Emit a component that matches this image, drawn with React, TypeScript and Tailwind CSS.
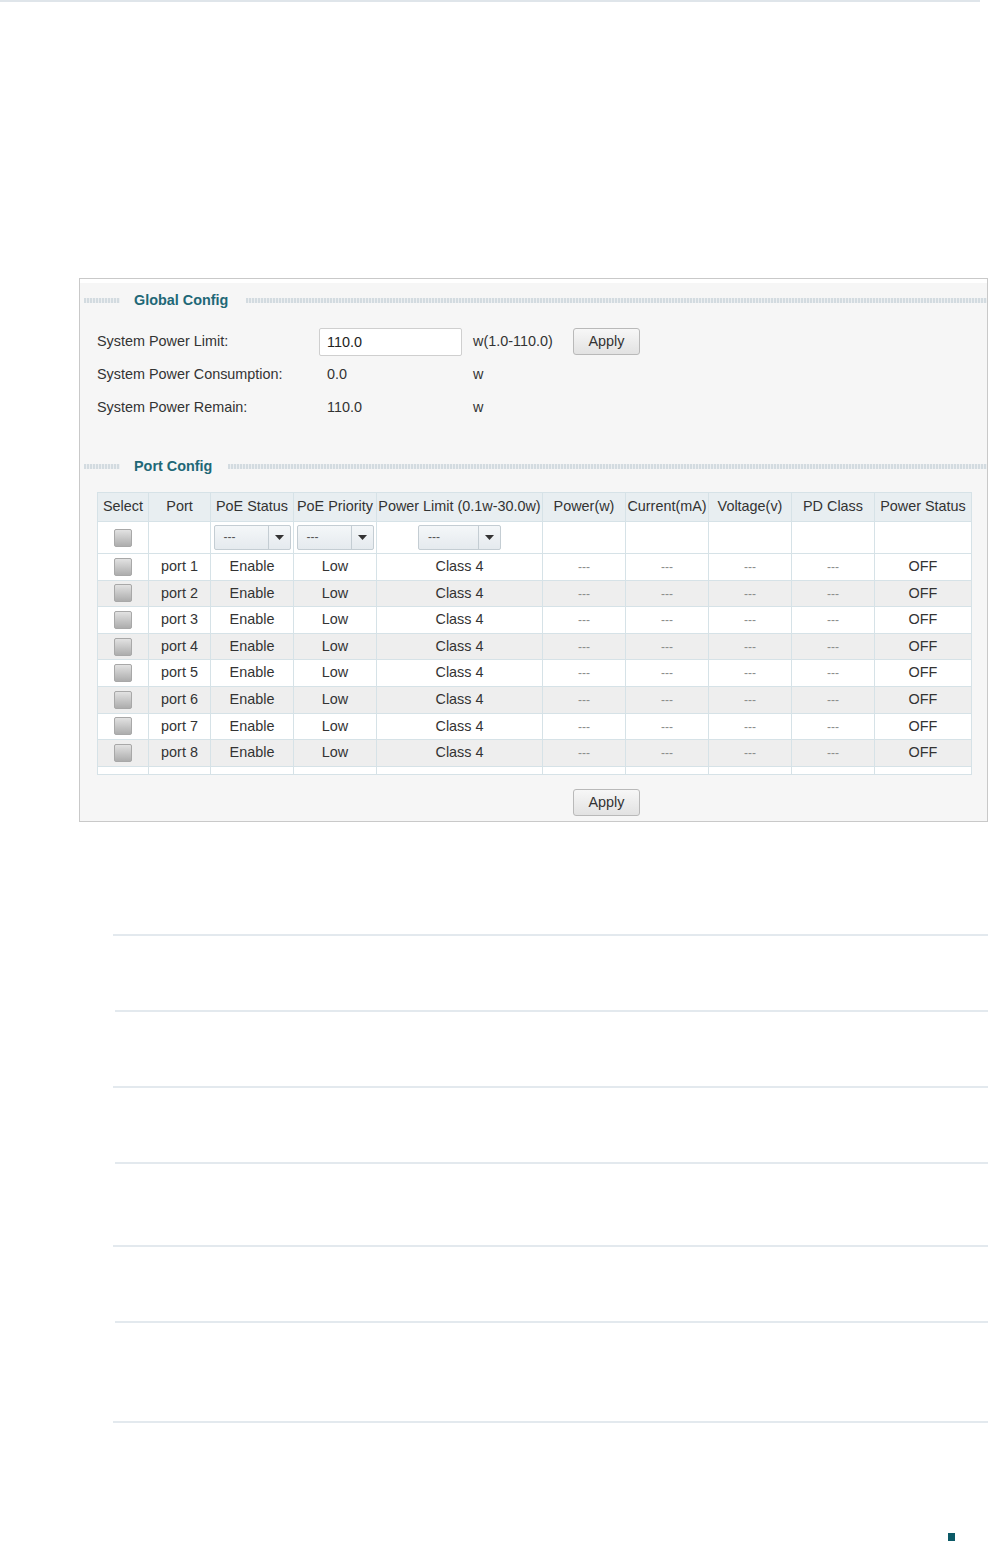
import React from "react";

const headers = [
  "Select",
  "Port",
  "PoE Status",
  "PoE Priority",
  "Power Limit (0.1w-30.0w)",
  "Power(w)",
  "Current(mA)",
  "Voltage(v)",
  "PD Class",
  "Power Status",
];

const colWidths = [51, 62, 83, 83, 166, 83, 83, 83, 83, 97];

const ports = [1, 2, 3, 4, 5, 6, 7, 8];

// lines below the panel: top offset from previous line, and left start
const docLines = [
  { mt: "mt-[112px]", ml: "ml-[113px]" },
  { mt: "mt-[74px]", ml: "ml-[115px]" },
  { mt: "mt-[74px]", ml: "ml-[113px]" },
  { mt: "mt-[74px]", ml: "ml-[115px]" },
  { mt: "mt-[81px]", ml: "ml-[113px]" },
  { mt: "mt-[74px]", ml: "ml-[115px]" },
  { mt: "mt-[98px]", ml: "ml-[113px]" },
];

const SectionTitle = ({ title, gap }: { title: string; gap: string }) => (
  <div className="flex h-[20px] items-center">
    <div className="ml-[4px] h-[5px] w-[36px] bg-[repeating-linear-gradient(90deg,#d3dbe0_0px,#d3dbe0_2px,#eceff1_2px,#eceff1_3px)]" />
    <span className="ml-[14px] text-[14.4px] font-bold leading-[20px] text-[#1f6877]">
      {title}
    </span>
    <div
      className={`${gap} h-[5px] flex-1 bg-[repeating-linear-gradient(90deg,#d3dbe0_0px,#d3dbe0_2px,#eceff1_2px,#eceff1_3px)]`}
    />
  </div>
);

const ApplyButton = () => (
  <button className="h-[27px] w-[67px] rounded-[3px] border border-[#b9b9b9] bg-gradient-to-b from-[#f7f7f7] to-[#e2e2e2] text-[14.4px] leading-[25px] text-[#333]">
    Apply
  </button>
);

const Checkbox = () => (
  <span className="mx-auto block h-[18px] w-[18px] rounded-[2px] border border-[#a8a8a8] bg-gradient-to-b from-[#e2e2e2] to-[#adadad]" />
);

const Dropdown = ({ width }: { width: string }) => (
  <div
    className={`mx-auto flex h-[25px] ${width} items-stretch rounded-[2px] border border-[#c4cdd3] bg-gradient-to-b from-[#f4f7f9] to-[#e5eaee]`}
  >
    <span className="flex-1 pl-[9px] text-left text-[12px] leading-[23px] text-[#555]">
      ---
    </span>
    <span className="flex w-[22px] items-center justify-center border-l border-[#c4cdd3]">
      <svg width="9" height="5" viewBox="0 0 9 5">
        <path d="M0 0h9L4.5 5z" fill="#333" />
      </svg>
    </span>
  </div>
);

const Dash = () => <span className="text-[12px] text-[#8c8c8c]">---</span>;

const cell = "border border-[#d6e2e7] p-0 text-center";

const App = () => {
  return (
    <div className="relative h-[1542px] w-[988px] overflow-hidden bg-white font-['Liberation_Sans',Arial,sans-serif] text-[14.4px] text-[#333]">
      <div className="h-[2px] w-[980px] bg-[#dfe5ea]" />

      {/* PoE config panel */}
      <div className="ml-[79px] mt-[276px] h-[544px] w-[909px] border border-[#c9c9c9] bg-[#f6f6f6]">
        <div className="h-[4px] bg-white" />
        <div className="mt-[7px]">
          <SectionTitle title="Global Config" gap="ml-[18px]" />
        </div>

        <div className="ml-[17px] mt-[15px] grid grid-cols-[222px_154px_auto] items-center">
          <div className="flex h-[33px] items-center">System Power Limit:</div>
          <div className="flex h-[33px] items-center">
            <div className="h-[28px] w-[143px] rounded-[2px] border border-[#cfcfcf] bg-white pl-[7px] leading-[26px] text-[#222]">
              110.0
            </div>
          </div>
          <div className="flex h-[33px] items-center">
            <span className="w-[100px]">w(1.0-110.0)</span>
            <ApplyButton />
          </div>

          <div className="flex h-[33px] items-center">System Power Consumption:</div>
          <div className="flex h-[33px] items-center pl-[8px]">0.0</div>
          <div className="flex h-[33px] items-center">w</div>

          <div className="flex h-[33px] items-center">System Power Remain:</div>
          <div className="flex h-[33px] items-center pl-[8px]">110.0</div>
          <div className="flex h-[33px] items-center">w</div>
        </div>

        <div className="mt-[32px]">
          <SectionTitle title="Port Config" gap="ml-[16px]" />
        </div>

        <table className="ml-[17px] mt-[16px] w-[875px] table-fixed border-collapse">
          <colgroup>
            {colWidths.map((w, i) => (
              <col key={i} style={{ width: w }} />
            ))}
          </colgroup>
          <thead>
            <tr className="h-[29px] bg-[#e8eef1]">
              {headers.map((h) => (
                <th key={h} className={`${cell} whitespace-nowrap font-normal text-[#333]`}>
                  {h}
                </th>
              ))}
            </tr>
          </thead>
          <tbody>
            <tr className="h-[32px] bg-white">
              <td className={cell}>
                <Checkbox />
              </td>
              <td className={cell} />
              <td className={cell}>
                <Dropdown width="w-[77px]" />
              </td>
              <td className={cell}>
                <Dropdown width="w-[77px]" />
              </td>
              <td className={cell}>
                <Dropdown width="w-[83px]" />
              </td>
              <td className={cell} />
              <td className={cell} />
              <td className={cell} />
              <td className={cell} />
              <td className={cell} />
            </tr>
            {ports.map((p) => (
              <tr
                key={p}
                className={`h-[26.6px] ${p % 2 === 0 ? "bg-[#eeeeee]" : "bg-white"}`}
              >
                <td className={cell}>
                  <Checkbox />
                </td>
                <td className={cell}>port {p}</td>
                <td className={cell}>Enable</td>
                <td className={cell}>Low</td>
                <td className={cell}>Class 4</td>
                <td className={cell}>
                  <Dash />
                </td>
                <td className={cell}>
                  <Dash />
                </td>
                <td className={cell}>
                  <Dash />
                </td>
                <td className={cell}>
                  <Dash />
                </td>
                <td className={cell}>OFF</td>
              </tr>
            ))}
            <tr className="h-[8px] bg-white">
              {colWidths.map((_, i) => (
                <td key={i} className={cell} />
              ))}
            </tr>
          </tbody>
        </table>

        <div className="ml-[493px] mt-[14px]">
          <ApplyButton />
        </div>
      </div>

      {/* document table rules */}
      {docLines.map((l, i) => (
        <div key={i} className={`${l.mt} ${l.ml} h-[2px] bg-[#e3e9ee]`} />
      ))}

      <div className="ml-[948px] mt-[110px] h-[8px] w-[7px] bg-[#0c5a67]" />
    </div>
  );
};

export default App;
